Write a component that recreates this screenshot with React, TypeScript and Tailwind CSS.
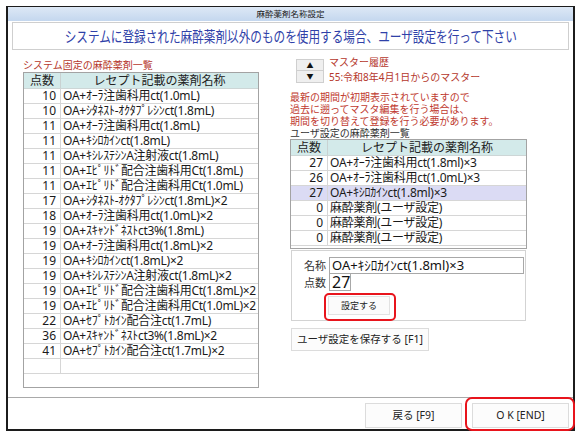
import React from "react";

const leftRows: [string, string][] = [
  ["10", "OA+ｵｰﾗ注歯科用ct(1.0mL)"],
  ["10", "OA+ｼﾀﾈｽﾄ-ｵｸﾀﾌﾟﾚｼﾝct(1.8mL)"],
  ["11", "OA+ｵｰﾗ注歯科用ct(1.8mL)"],
  ["11", "OA+ｷｼﾛｶｲﾝct(1.8mL)"],
  ["11", "OA+ｷｼﾚｽﾃｼﾝA注射液ct(1.8mL)"],
  ["11", "OA+ｴﾋﾟﾘﾄﾞ配合注歯科用Ct(1.8mL)"],
  ["11", "OA+ｴﾋﾟﾘﾄﾞ配合注歯科用Ct(1.0mL)"],
  ["17", "OA+ｼﾀﾈｽﾄ-ｵｸﾀﾌﾟﾚｼﾝct(1.8mL)×2"],
  ["18", "OA+ｵｰﾗ注歯科用ct(1.0mL)×2"],
  ["19", "OA+ｽｷｬﾝﾄﾞﾈｽﾄct3%(1.8mL)"],
  ["19", "OA+ｵｰﾗ注歯科用ct(1.8mL)×2"],
  ["19", "OA+ｷｼﾛｶｲﾝct(1.8mL)×2"],
  ["19", "OA+ｷｼﾚｽﾃｼﾝA注射液ct(1.8mL)×2"],
  ["19", "OA+ｴﾋﾟﾘﾄﾞ配合注歯科用Ct(1.8mL)×2"],
  ["19", "OA+ｴﾋﾟﾘﾄﾞ配合注歯科用Ct(1.0mL)×2"],
  ["22", "OA+ｾﾌﾟﾄｶｲﾝ配合注ct(1.7mL)"],
  ["36", "OA+ｽｷｬﾝﾄﾞﾈｽﾄct3%(1.8mL)×2"],
  ["41", "OA+ｾﾌﾟﾄｶｲﾝ配合注ct(1.7mL)×2"],
];

const rightRows: [string, string][] = [
  ["27", "OA+ｵｰﾗ注歯科用ct(1.8ml)×3"],
  ["26", "OA+ｵｰﾗ注歯科用ct(1.0mL)×3"],
  ["27", "OA+ｷｼﾛｶｲﾝct(1.8ml)×3"],
  ["0", "麻酔薬剤(ユーザ設定)"],
  ["0", "麻酔薬剤(ユーザ設定)"],
  ["0", "麻酔薬剤(ユーザ設定)"],
];

function Header() {
  return (
    <div className="flex h-[16px] shrink-0 border-b border-[#cdd6d6] bg-[#d3eaea] text-[12px] leading-[15px] text-[#222]">
      <div className="w-[37px] shrink-0 border-r border-[#c9d2d2] text-center">点数</div>
      <div className="flex-1 text-center">レセプト記載の薬剤名称</div>
    </div>
  );
}

function Row({ n, name, selected }: { n: string; name: string; selected?: boolean }) {
  return (
    <div
      className={`flex h-[15px] shrink-0 border-b border-[#d6d6d6] text-[12px] leading-[14px] text-[#1a1a1a] ${
        selected ? "bg-[#dbdbf4]" : "bg-white"
      }`}
    >
      <div className="w-[37px] shrink-0 border-r border-[#d6d6d6] pr-[4px] text-right">{n}</div>
      <div className="flex-1 whitespace-nowrap pl-[2px] tracking-[-0.25px]">{name}</div>
    </div>
  );
}

export default function App() {
  return (
    <div className="h-[437px] w-[584px] overflow-hidden bg-white pl-[6px] pt-[6px] font-['Noto_Sans','Noto_Sans_CJK_JP',sans-serif] text-[#1a1a1a]">
      <div className="flex h-[425px] w-[569px] flex-col border-x-2 border-b-2 border-t border-[#1c1c1c]">
        {/* title bar */}
        <div className="h-[14px] shrink-0 bg-linear-to-b from-[#dde8f5] to-[#c4d7ee] text-center text-[8.5px] leading-[14px] text-[#222]">
          麻酔薬剤名称設定
        </div>
        {/* header message */}
        <div className="mx-[4px] mt-[1px] flex h-[28px] shrink-0 items-center justify-center border border-[#cfcfcf]">
          <span className="inline-block scale-x-[0.775] whitespace-nowrap text-[15px] leading-[20px] text-[#2f41a8]">
            システムに登録された麻酔薬剤以外のものを使用する場合、ユーザ設定を行って下さい
          </span>
        </div>
        {/* main */}
        <div className="flex h-[347px] shrink-0">
          {/* left */}
          <div className="ml-[15px] flex w-[236px] flex-col pt-[8px]">
            <div className="h-[14px] text-[10px] leading-[14px] text-[#b5372c]">システム固定の麻酔薬剤一覧</div>
            <div className="flex h-[316px] flex-col border border-[#a3a3a3] bg-white">
              <Header />
              {leftRows.map(([n, name], i) => (
                <Row key={i} n={n} name={name} />
              ))}
              <Row n="" name="" />
            </div>
          </div>
          {/* right */}
          <div className="ml-[31px] flex w-[237px] flex-col pt-[9px]">
            <div className="flex h-[24px]">
              <div className="ml-[6px] flex w-[28px] flex-col">
                <div className="flex h-[12px] items-center justify-center border border-[#cfcfcf] bg-[#efefef] text-[7px] leading-none text-[#111]">
                  ▲
                </div>
                <div className="flex h-[12px] items-center justify-center border border-t-0 border-[#cfcfcf] bg-[#efefef] text-[7px] leading-none text-[#111]">
                  ▼
                </div>
              </div>
              <div className="-mt-[4px] ml-[5px] flex flex-col text-[10px] leading-[15px] text-[#b5372c]">
                <div>マスター履歴</div>
                <div>55:令和8年4月1日からのマスター</div>
              </div>
            </div>
            <div className="mt-[8px] text-[10px] leading-[12px] text-[#c03a2f]">
              <div>最新の期間が初期表示されていますので</div>
              <div>過去に遡ってマスタ編集を行う場合は、</div>
              <div>期間を切り替えて登録を行う必要があります。</div>
            </div>
            <div className="h-[12px] text-[10px] leading-[12px] text-[#333]">ユーザ設定の麻酔薬剤一覧</div>
            <div className="flex h-[110px] flex-col border border-[#a3a3a3] bg-white">
              <Header />
              {rightRows.map(([n, name], i) => (
                <Row key={i} n={n} name={name} selected={i === 2} />
              ))}
            </div>
            {/* form */}
            <div className="ml-[1px] mt-[1px] h-[71px] w-[235px] border border-[#d3d3d3] pt-[6px]">
              <div className="flex items-center">
                <div className="ml-[12px] w-[25px] text-[11px] leading-[17px] text-[#333]">名称</div>
                <div className="h-[17px] w-[195px] border border-[#a8a8a8] pl-[2px] text-[13px] leading-[15px] text-[#111]">
                  OA+ｷｼﾛｶｲﾝct(1.8ml)×3
                </div>
              </div>
              <div className="flex items-center">
                <div className="ml-[12px] w-[25px] text-[11px] leading-[17px] text-[#333]">点数</div>
                <div className="h-[17px] w-[22px] border border-t-0 border-[#a8a8a8] pl-[2px] text-[16px] leading-[16px] text-[#111]">
                  27
                </div>
              </div>
              <div className="relative ml-[36px] mt-[5px] w-[62px]">
                <div className="flex h-[19px] w-[62px] items-center justify-center border border-[#e2e2e2] bg-[#fbfbfb] text-[9px] text-[#222]">
                  設定する
                </div>
                <div className="pointer-events-none absolute -bottom-[6px] -left-[4px] -right-[6px] -top-[3px] rounded-[5px] border-[2.5px] border-[#e8141c]" />
              </div>
            </div>
            <div className="ml-[1px] mt-[7px] flex h-[23px] w-[138px] items-center justify-center border border-[#dcdcdc] bg-[#fcfcfc] text-[10.5px] text-[#222]">
              ユーザ設定を保存する [F1]
            </div>
          </div>
        </div>
        {/* footer */}
        <div className="flex flex-1 items-start justify-end gap-[10px] border-t border-[#a9a9a9] pr-[4px] pt-[5px]">
          <div className="flex h-[25px] w-[97px] items-center justify-center border border-[#dcdcdc] bg-[#fcfcfc] text-[10.5px] text-[#222]">
            戻る [F9]
          </div>
          <div className="relative">
            <div className="flex h-[25px] w-[97px] items-center justify-center border border-[#dcdcdc] bg-[#fcfcfc] text-[10.5px] text-[#222]">
              O K [END]
            </div>
            <div className="pointer-events-none absolute -bottom-[3px] -left-[7px] -right-[6px] -top-[6px] rounded-[7px] border-[2.5px] border-[#e8141c]" />
          </div>
        </div>
      </div>
    </div>
  );
}
